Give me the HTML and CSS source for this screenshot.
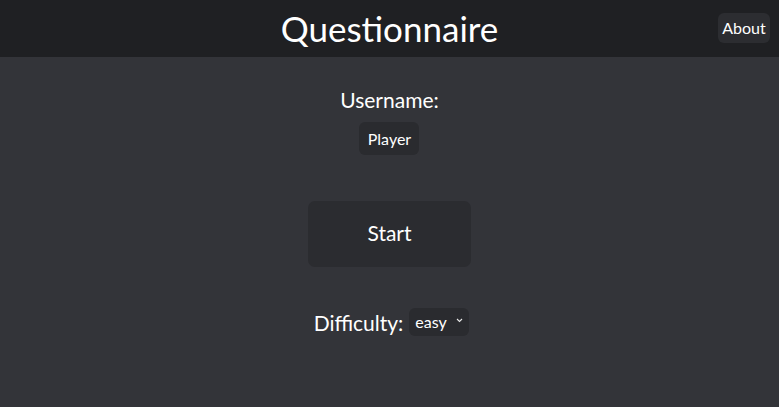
FILE: index.html
```html
<!DOCTYPE html>
<html>
<head>
<meta charset="utf-8">
<link rel="stylesheet" href="styles.css">
</head>
<body>
<header class="topbar">
  <h1 class="title">Questionnaire</h1>
  <button class="about">About</button>
</header>
<main class="main">
  <div class="user">
    <label class="user-label">Username:</label>
    <span class="user-input">Player</span>
  </div>
  <button class="start">Start</button>
  <div class="difficulty">
    <span class="diff-label">Difficulty:</span>
    <span class="select">easy <svg class="chev" width="7" height="5" viewBox="0 0 7 5"><path d="M1 1 L3.5 3.5 L6 1" fill="none" stroke="#e8e8e8" stroke-width="1.1"/></svg></span>
  </div>
</main>
</body>
</html>
```
FILE: styles.css
```css
* { box-sizing: border-box; }
html, body { margin: 0; height: 100%; }
body {
  background: #333439;
  font-family: Lato, "Open Sans", sans-serif;
  color: #ffffff;
}
.topbar {
  height: 57px;
  background: #1f2023;
  display: flex;
  align-items: center;
  justify-content: center;
  position: relative;
}
.title {
  margin: 0;
  font-weight: 400;
  font-size: 35px;
  line-height: 1;
  margin-top: -1px;
}
.about {
  position: absolute;
  left: 718px;
  top: 13px;
  width: 52px;
  height: 30px;
  padding: 0 0 2px;
  border: none;
  border-radius: 6px;
  background: #2c2d31;
  color: #fff;
  font-family: inherit;
  font-size: 16px;
}
.main {
  display: flex;
  flex-direction: column;
  align-items: center;
  padding-top: 32px;
}
.user {
  display: flex;
  flex-direction: column;
  align-items: center;
}
.user-label { font-size: 21px; line-height: 22px; }
.user-input {
  margin-top: 11px;
  width: 60px;
  height: 33px;
  display: flex;
  align-items: center;
  justify-content: center;
  background: #2a2b2f;
  border-radius: 6px;
  font-size: 16px;
  padding-bottom: 1px;
}
.start {
  margin-top: 46px;
  width: 163px;
  height: 66px;
  padding: 0 0 3px;
  border: none;
  border-radius: 7px;
  background: #2b2c30;
  color: #fff;
  font-family: inherit;
  font-size: 21px;
}
.difficulty {
  margin-top: 41px;
  margin-left: 4px;
  display: flex;
  align-items: center;
  gap: 6px;
}
.diff-label { font-size: 21px; }
.select {
  width: 60px;
  height: 28px;
  padding: 0 6px 1px 6px;
  display: flex;
  align-items: center;
  justify-content: space-between;
  background: #2a2b2f;
  border-radius: 6px;
  font-size: 16px;
}
.chev { margin-top: -2px; }
```
